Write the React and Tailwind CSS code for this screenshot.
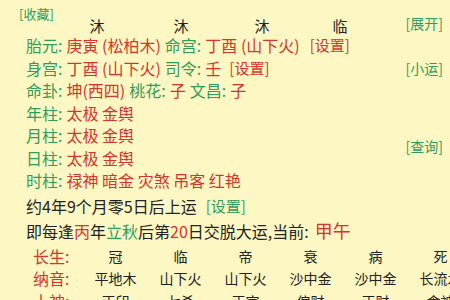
import React from "react";

const G = "text-[#2f9d5c]";
const R = "text-[#d5352c]";

const pillars = [
  ["年柱", "太极 金舆"],
  ["月柱", "太极 金舆"],
  ["日柱", "太极 金舆"],
  ["时柱", "禄神 暗金 灾煞 吊客 红艳"],
];

const table = [
  ["长生", ["冠", "临", "帝", "衰", "病", "死"]],
  ["纳音", ["平地木", "山下火", "山下火", "沙中金", "沙中金", "长流水"]],
  ["十神", ["正印", "七杀", "正官", "偏财", "正财", "食神"]],
];

const App = () => {
  return (
    <div
      className="w-[450px] h-[300px] overflow-hidden bg-[#fdf8c3] text-[#222]"
      style={{ fontFamily: '"Noto Sans CJK SC", "Noto Sans", sans-serif' }}
    >
      {/* header */}
      <div className={`pl-[19px] pt-[6px] text-[13px] leading-[16px] ${G}`}>[收藏]</div>
      <div className="flex items-center h-[16px] -mt-[4px] text-[15px] leading-[16px]">
        <div className="flex">
          <span className="w-[16px] ml-[89px] text-center">沐</span>
          <span className="w-[16px] ml-[68px] text-center">沐</span>
          <span className="w-[16px] ml-[65px] text-center">沐</span>
          <span className="w-[16px] ml-[62px] text-center">临</span>
        </div>
        <span className={`ml-auto mr-[7px] -translate-y-[3px] text-[14px] ${G}`}>[展开]</span>
      </div>

      {/* info rows */}
      <div className="pl-[26px] text-[16px] leading-[22.5px]">
        <div className="flex">
          <span className={G}>胎元: </span>
          <span className={`${R} ml-[4px]`}>庚寅 (松柏木)</span>
          <span className={`${G} ml-[4px]`}>命宫: </span>
          <span className={`${R} ml-[4px]`}>丁酉 (山下火)</span>
          <span className={`${R} ml-[10px] text-[15px]`}>[设置]</span>
        </div>
        <div className="flex">
          <span className={G}>身宫: </span>
          <span className={`${R} ml-[4px]`}>丁酉 (山下火)</span>
          <span className={`${G} ml-[4px]`}>司令: </span>
          <span className={`${R} ml-[4px]`}>壬</span>
          <span className={`${R} ml-[8px] text-[15px]`}>[设置]</span>
          <span className={`ml-auto mr-[7px] text-[14px] ${G}`}>[小运]</span>
        </div>
        <div className="flex">
          <span className={G}>命卦: </span>
          <span className={`${R} ml-[4px]`}>坤(西四)</span>
          <span className={`${G} ml-[4px]`}>桃花: </span>
          <span className={`${R} ml-[4px]`}>子</span>
          <span className={`${G} ml-[4px]`}>文昌: </span>
          <span className={`${R} ml-[4px]`}>子</span>
        </div>
        {pillars.map(([k, v], i) => (
          <div key={k} className="flex">
            <span className={G}>{k}: </span>
            <span className={`${R} ml-[4px]`}>{v}</span>
            {i === 1 && (
              <span className={`ml-auto mr-[7px] translate-y-[11px] text-[14px] ${G}`}>[查询]</span>
            )}
          </div>
        ))}
      </div>

      {/* dayun */}
      <div className="pl-[26px] text-[16px] mt-[2px]">
        <div className="flex leading-[24px]">
          <span>约4年9个月零5日后上运</span>
          <span className={`${G} ml-[9px] text-[15px]`}>[设置]</span>
        </div>
        <div className="flex items-baseline leading-[24px]">
          <span>即每逢</span>
          <span className={R}>丙</span>
          <span>年</span>
          <span className={G}>立秋</span>
          <span>后第</span>
          <span className={R}>20</span>
          <span>日交脱大运,当前: </span>
          <span className={`${R} ml-[6px] text-[18px]`}>甲午</span>
        </div>
      </div>

      {/* table */}
      <div className="mt-[2px] text-[14px] leading-[22.5px]">
        {table.map(([k, cells]) => (
          <div key={k} className="flex whitespace-nowrap">
            <span className={`${R} w-[50px] shrink-0 ml-[33px] text-[16px]`}>{k}:</span>
            {cells.map((c, i) => (
              <span key={i} className="w-[65px] shrink-0 text-center">{c}</span>
            ))}
          </div>
        ))}
      </div>
    </div>
  );
};

export default App;
